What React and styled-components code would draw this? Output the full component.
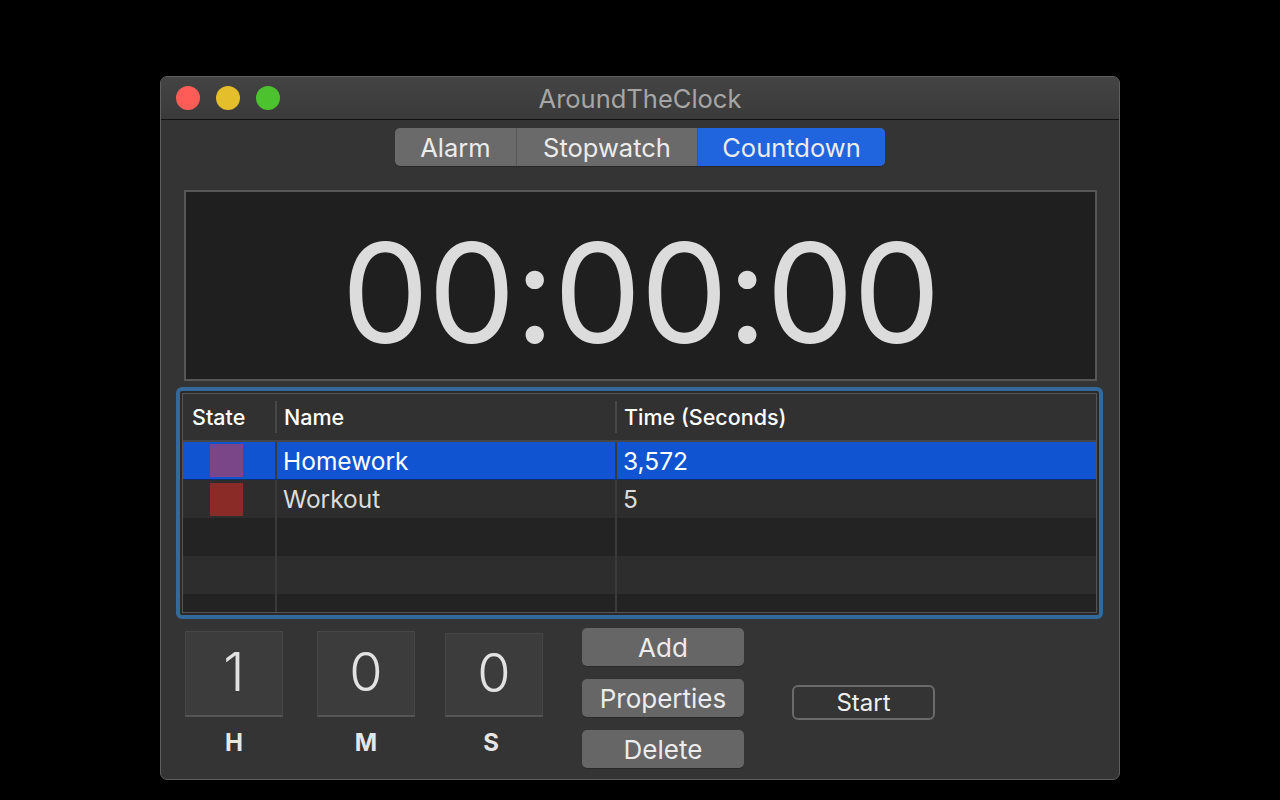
import React from "react";
import styled, { createGlobalStyle } from "styled-components";

const Global = createGlobalStyle`
  html, body {
    margin: 0;
    padding: 0;
    background: #000;
    font-family: Inter, "Noto Sans", sans-serif;
  }
`;

const Page = styled.div`
  width: 1280px;
  height: 800px;
  padding: 76px 0 0 160px;
  box-sizing: border-box;
`;

const Window = styled.div`
  width: 960px;
  height: 704px;
  box-sizing: border-box;
  border: 1px solid #5e5e5e;
  border-radius: 7px;
  background: #343434;
  overflow: hidden;
  display: flex;
  flex-direction: column;
`;

const TitleBar = styled.div`
  height: 42px;
  flex: none;
  display: flex;
  align-items: center;
  position: relative;
  background: linear-gradient(#444444, #3a3a3a);
  border-bottom: 1px solid #111;
`;

const Lights = styled.div`
  display: flex;
  gap: 16px;
  padding-left: 15px;
`;

const Light = styled.span`
  width: 24px;
  height: 24px;
  border-radius: 50%;
  background: ${(p) => p.color};
`;

const Title = styled.div`
  position: absolute;
  left: 0;
  right: 0;
  text-align: center;
  color: #a6a6a6;
  font-size: 25.5px;
  pointer-events: none;
`;

const Body = styled.div`
  display: flex;
  flex-direction: column;
  padding: 8px 0 0 15px;
`;

const Segmented = styled.div`
  align-self: flex-start;
  margin-left: 219px;
  display: flex;
  height: 38px;
  border-radius: 5px;
  overflow: hidden;
  background: #6a6a6a;
  box-shadow: 0 1px 0 #262626;
`;

const Segment = styled.div`
  width: ${(p) => p.w}px;
  box-sizing: border-box;
  display: flex;
  align-items: center;
  justify-content: center;
  font-size: 25.5px;
  color: #ececec;
  background: ${(p) => (p.active ? "#2064de" : "transparent")};
  border-left: ${(p) => (p.first ? "none" : "1px solid #555")};
`;

const Display = styled.div`
  margin: 24px 0 0 8px;
  width: 913px;
  height: 191px;
  box-sizing: border-box;
  border: 2px solid #565656;
  background: #1f1f1f;
  display: flex;
  align-items: center;
  justify-content: center;
  color: #dcdcdc;
  font-size: 139px;
  letter-spacing: -1px;
  font-weight: 400;
  padding-top: 14px;
`;

const Ring = styled.div`
  margin-top: 6px;
  width: 927px;
  height: 232px;
  box-sizing: border-box;
  border: 4px solid #346a9b;
  border-radius: 6px;
  padding: 2px;
  background: #2a2a2a;
`;

const Table = styled.div`
  height: 100%;
  box-sizing: border-box;
  border: 1px solid #555;
  background: #232323;
  display: flex;
  flex-direction: column;
  overflow: hidden;
`;

const cols = "92px 340px 1fr";

const HeaderRow = styled.div`
  display: grid;
  grid-template-columns: ${cols};
  height: 48px;
  flex: none;
  background: #313131;
  border-bottom: 2px solid #464646;
  box-sizing: border-box;
`;

const HeadCell = styled.div`
  display: flex;
  align-items: center;
  padding-left: 9px;
  color: #fff;
  font-size: 21.5px;
  font-weight: 500;
  position: relative;
  &:not(:first-child)::before {
    content: "";
    position: absolute;
    left: 0;
    top: 7px;
    bottom: 7px;
    width: 2px;
    background: #474747;
  }
`;

const Row = styled.div`
  display: grid;
  grid-template-columns: ${cols};
  height: 38px;
  flex: none;
  background: ${(p) => (p.selected ? "#1054d2" : p.alt ? "#2d2d2d" : "#232323")};
  border-bottom: ${(p) => (p.selected ? "1px solid #0b2f70" : "none")};
  box-sizing: border-box;
`;

const Cell = styled.div`
  display: flex;
  align-items: center;
  padding-left: 6px;
  color: ${(p) => (p.selected ? "#fff" : "#dcdcdc")};
  font-size: 24.5px;
  border-left: ${(p) => (p.first ? "none" : "2px solid #3a3a3a")};
`;

const Swatch = styled.div`
  width: 33px;
  height: 33px;
  margin-left: 21px;
  background: ${(p) => p.color};
`;

const Controls = styled.div`
  display: flex;
  margin-top: 9px;
  padding-left: 9px;
`;

const Field = styled.div`
  display: flex;
  flex-direction: column;
  align-items: center;
  width: 98px;
  margin-right: ${(p) => p.mr}px;
`;

const Box = styled.div`
  width: 98px;
  height: ${(p) => p.h || 86}px;
  margin-top: ${(p) => p.mt || 3}px;
  box-sizing: border-box;
  background: #3c3c3c;
  border: 1px solid #474747;
  border-bottom: 2px solid #555;
  display: flex;
  align-items: center;
  justify-content: center;
  color: #e2e2e2;
  font-size: 54px;
  font-weight: 300;
  padding-bottom: 4px;
`;

const Label = styled.div`
  margin-top: 11px;
  margin-right: ${(p) => p.shift || 0}px;
  font-size: 24px;
  font-weight: 700;
  color: #e6e6e6;
`;

const Buttons = styled.div`
  display: flex;
  flex-direction: column;
  gap: 13px;
  margin-left: 39px;
`;

const Button = styled.div`
  width: 162px;
  height: 38px;
  border-radius: 5px;
  background: #666;
  box-shadow: 0 1px 0 #2a2a2a;
  display: flex;
  align-items: center;
  justify-content: center;
  color: #ececec;
  font-size: 26px;
`;

const StartButton = styled.div`
  align-self: center;
  margin-left: 48px;
  margin-top: 9px;
  width: 143px;
  height: 35px;
  box-sizing: border-box;
  border: 2px solid #6a6a6a;
  border-radius: 6px;
  display: flex;
  align-items: center;
  justify-content: center;
  color: #f0f0f0;
  font-size: 24px;
`;

const timers = [
  { name: "Homework", time: "3,572", color: "#7a4688" },
  { name: "Workout", time: "5", color: "#8a2b27" },
];

export default function App() {
  return (
    <Page>
      <Global />
      <Window>
        <TitleBar>
          <Lights>
            <Light color="#fd5d56" />
            <Light color="#e5be2b" />
            <Light color="#4dc22f" />
          </Lights>
          <Title>AroundTheClock</Title>
        </TitleBar>
        <Body>
          <Segmented>
            <Segment w={121} first>Alarm</Segment>
            <Segment w={181}>Stopwatch</Segment>
            <Segment w={188} active>Countdown</Segment>
          </Segmented>
          <Display>00:00:00</Display>
          <Ring>
            <Table>
              <HeaderRow>
                <HeadCell>State</HeadCell>
                <HeadCell>Name</HeadCell>
                <HeadCell>Time (Seconds)</HeadCell>
              </HeaderRow>
              {timers.map((t, i) => (
                <Row key={t.name} selected={i === 0} alt={i % 2 === 1}>
                  <Cell first>
                    <Swatch color={t.color} />
                  </Cell>
                  <Cell selected={i === 0}>{t.name}</Cell>
                  <Cell selected={i === 0}>{t.time}</Cell>
                </Row>
              ))}
              {[0, 1, 2].map((i) => (
                <Row key={i} alt={i % 2 === 1}>
                  <Cell first />
                  <Cell />
                  <Cell />
                </Row>
              ))}
            </Table>
          </Ring>
          <Controls>
            <Field mr={34}>
              <Box>1</Box>
              <Label>H</Label>
            </Field>
            <Field mr={30}>
              <Box>0</Box>
              <Label>M</Label>
            </Field>
            <Field mr={0}>
              <Box mt={5} h={84}>0</Box>
              <Label shift={6}>S</Label>
            </Field>
            <Buttons>
              <Button>Add</Button>
              <Button>Properties</Button>
              <Button>Delete</Button>
            </Buttons>
            <StartButton>Start</StartButton>
          </Controls>
        </Body>
      </Window>
    </Page>
  );
}
